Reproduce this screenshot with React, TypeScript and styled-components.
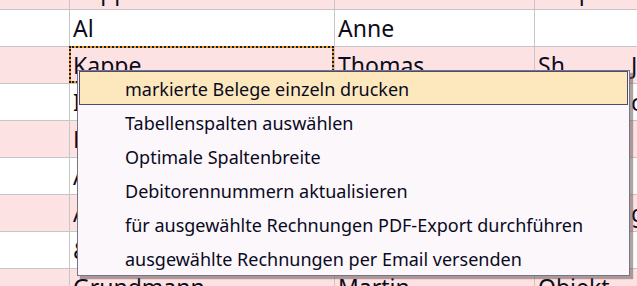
import styled, { createGlobalStyle } from 'styled-components';

const GlobalStyle = createGlobalStyle`
  html, body {
    margin: 0;
    padding: 0;
    background: #ffffff;
    overflow: hidden;
  }
  body {
    font-family: "Noto Sans", "Open Sans", sans-serif;
  }
`;

const Screen = styled.div`
  position: relative;
  width: 637px;
  height: 286px;
  overflow: hidden;
  background: #ffffff;
`;

const Table = styled.div`
  margin-top: -27px;
  display: flex;
  flex-direction: column;
`;

const Row = styled.div<{ $alt: boolean }>`
  display: flex;
  height: 37px;
  background: ${({ $alt }) => ($alt ? '#fde2e3' : '#ffffff')};
`;

const Cell = styled.div<{ $w?: number; $selected?: boolean; $plain?: boolean }>`
  position: relative;
  box-sizing: border-box;
  flex: ${({ $w }) => ($w ? `0 0 ${$w}px` : '1 1 auto')};
  height: 37px;
  padding: 3px 0 0 3px;
  border-bottom: 1px solid #c6c6c6;
  border-right: ${({ $plain }) => ($plain ? 'none' : '1px solid #c6c6c6')};
  font-size: 23px;
  line-height: 31px;
  color: #0c0c1c;
  white-space: nowrap;
  overflow: hidden;

  ${({ $selected }) =>
    $selected &&
    `
    overflow: visible;
    &::before, &::after {
      content: "";
      position: absolute;
      top: -1px;
      left: -1px;
      right: 0;
      bottom: 0;
      box-sizing: border-box;
    }
    &::before { border: 2px solid #f49a2c; }
    &::after { border: 2px dotted #1c1c1c; }
  `}
`;

const Menu = styled.div`
  position: absolute;
  left: 77px;
  top: 70px;
  width: 553px;
  box-sizing: border-box;
  padding: 0 1px;
  background: #fbf7fb;
  border: 1px solid #77748a;
  box-shadow: 3px 3px 1px rgba(110, 90, 90, 0.55);
  display: flex;
  flex-direction: column;
`;

const MenuItem = styled.div<{ $active?: boolean }>`
  box-sizing: border-box;
  height: 34px;
  display: flex;
  align-items: center;
  padding: 1px 0 0 45px;
  font-size: 18px;
  color: #0a0a1e;
  white-space: nowrap;
  border: 1px solid ${({ $active }) => ($active ? '#4c4c6c' : 'transparent')};
  background: ${({ $active }) => ($active ? '#fde8bd' : 'transparent')};
`;

const rows: string[][] = [
  ['', 'Kappelmeier', 'Thomas', 'Shop-Gru', ''],
  ['', 'Al', 'Anne', '', ''],
  ['', 'Kappe', 'Thomas', 'Sh', 'J'],
  ['', 'Isenberg', 'Peter', 'Shop', 'c'],
  ['', 'Kaiser', 'Klaus', 'Shop', ''],
  ['', 'Albers', 'Maria', 'Shop', ''],
  ['', 'Arndt', 'Stefan', 'Shop', 'g'],
  ['', '& Partner', 'Jens', 'Shop', ''],
  ['', 'Grundmann', 'Martin', 'Objekt', ''],
];

const menuItems = [
  'markierte Belege einzeln drucken',
  'Tabellenspalten auswählen',
  'Optimale Spaltenbreite',
  'Debitorennummern aktualisieren',
  'für ausgewählte Rechnungen PDF-Export durchführen',
  'ausgewählte Rechnungen per Email versenden',
];

const widths = [70, 265, 200, 93];

export default function App() {
  return (
    <>
      <GlobalStyle />
      <Screen>
        <Table>
          {rows.map((row, r) => (
            <Row key={r} $alt={r % 2 === 0}>
              {row.map((text, c) => (
                <Cell
                  key={c}
                  $w={widths[c]}
                  $plain={c >= 3}
                  $selected={r === 2 && c === 1}
                >
                  {text}
                </Cell>
              ))}
            </Row>
          ))}
        </Table>
        <Menu>
          {menuItems.map((item, i) => (
            <MenuItem key={item} $active={i === 0}>
              {item}
            </MenuItem>
          ))}
        </Menu>
      </Screen>
    </>
  );
}
